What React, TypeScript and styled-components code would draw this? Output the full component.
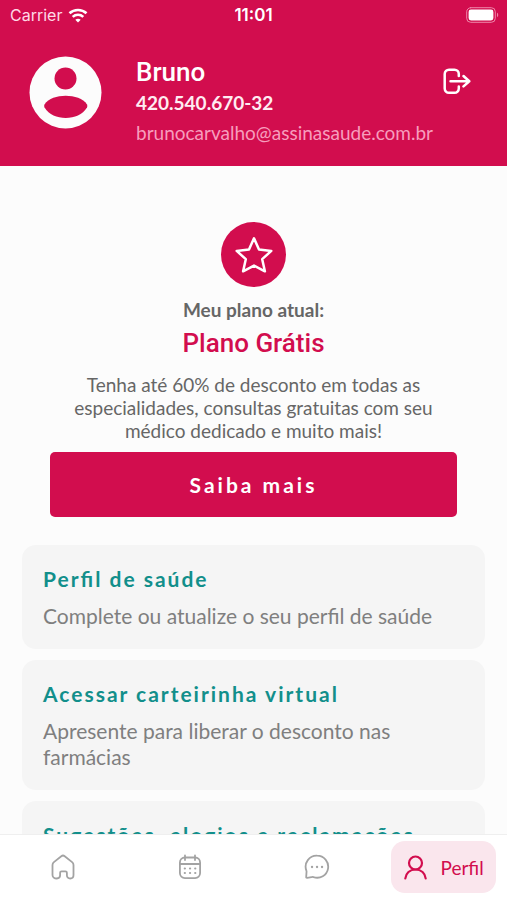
import React from "react";
import styled, { createGlobalStyle } from "styled-components";

const color = {
  brand: "#d20d4e",
  brandSoft: "#fae6ed",
  teal: "#128f8b",
  page: "#fcfcfc",
  card: "#f5f5f5",
  ink: "#666666",
  muted: "#7f7f7f",
  idle: "#a3a3a3",
};

const GlobalStyle = createGlobalStyle`
  *, *::before, *::after { box-sizing: border-box; }
  body {
    margin: 0;
    background: ${color.page};
    font-family: Lato, "Liberation Sans", sans-serif;
  }
  h1, h2, p { margin: 0; }
  button { font: inherit; border: 0; padding: 0; cursor: pointer; }
`;

const Screen = styled.div`
  display: flex;
  flex-direction: column;
  height: 100vh;
`;

const Header = styled.header`
  flex: none;
  background: ${color.brand};
  color: #fff;
  padding-bottom: 18px;
`;

const StatusBar = styled.div`
  display: grid;
  grid-template-columns: 1fr auto 1fr;
  align-items: center;
  height: 30px;
  padding: 0 8px;
  font-family: Inter, sans-serif;
  font-size: 16px;
  line-height: 20px;
`;

const Carrier = styled.div`
  display: flex;
  align-items: center;
  gap: 6px;
  padding-left: 2px;
  color: #ffd9e6;
`;

const Clock = styled.time`
  font-size: 17px;
  font-weight: 600;
`;

const StatusEnd = styled.div`
  display: flex;
  justify-content: flex-end;
`;

const Identity = styled.div`
  display: flex;
  align-items: flex-start;
  padding: 26px 36px 0 29px;
`;

const IdentityText = styled.div`
  flex: 1;
  min-width: 0;
  margin-left: 34px;
`;

const UserName = styled.h1`
  font-family: Roboto, sans-serif;
  font-size: 26px;
  font-weight: 500;
  line-height: 32px;
`;

const Document = styled.p`
  font-size: 19px;
  font-weight: 700;
  line-height: 30px;
  color: #ffecf2;
`;

const Email = styled.p`
  font-size: 19px;
  line-height: 30px;
  color: #f79dbd;
  white-space: nowrap;
`;

const LogoutButton = styled.button`
  display: flex;
  margin-top: 12px;
  background: none;
  color: #fff;
`;

const Content = styled.main`
  flex: 1;
  min-height: 0;
  overflow: hidden auto;
  scrollbar-width: none;
  padding: 56px 22px 20px;
`;

const Plan = styled.section`
  display: flex;
  flex-direction: column;
  align-items: center;
  padding: 0 28px;
  text-align: center;
`;

const PlanBadge = styled.div`
  display: grid;
  place-items: center;
  width: 65px;
  height: 65px;
  border-radius: 50%;
  background: ${color.brand};
  color: #fff;
`;

const PlanLabel = styled.p`
  margin-top: 11px;
  font-size: 19px;
  font-weight: 700;
  line-height: 24px;
  color: ${color.ink};
`;

const PlanName = styled.h2`
  margin-top: 5px;
  font-family: Roboto, sans-serif;
  font-size: 26px;
  font-weight: 500;
  line-height: 32px;
  color: ${color.brand};
`;

const PlanText = styled.p`
  max-width: 360px;
  margin-top: 14px;
  font-size: 19px;
  line-height: 23px;
  color: ${color.ink};
`;

const PrimaryButton = styled.button`
  width: 100%;
  height: 65px;
  margin-top: 10px;
  border-radius: 5px;
  background: ${color.brand};
  color: #fff;
  && {
    font-family: Lato, sans-serif;
    font-size: 21px;
    font-weight: 700;
    letter-spacing: 3px;
  }
`;

const CardList = styled.div`
  display: flex;
  flex-direction: column;
  gap: 11px;
  margin-top: 28px;
`;

const Card = styled.button`
  display: block;
  width: 100%;
  padding: 20px 21px;
  border-radius: 14px;
  background: ${color.card};
  text-align: left;
`;

const CardTitle = styled.span`
  display: block;
  font-size: 21px;
  font-weight: 700;
  line-height: 28px;
  letter-spacing: 2px;
  font-feature-settings: "liga" 1;
  color: ${color.teal};
`;

const CardText = styled.span`
  display: block;
  margin-top: 10px;
  font-size: 21px;
  line-height: 26px;
  color: ${color.muted};
`;

const TabBar = styled.nav`
  flex: none;
  display: grid;
  grid-template-columns: repeat(4, 1fr);
  align-items: start;
  height: 66px;
  padding-top: 6px;
  border-top: 1px solid #efefef;
  background: #fff;
`;

const Tab = styled.button<{ $active?: boolean }>`
  display: flex;
  align-items: center;
  justify-content: center;
  gap: 14px;
  height: 52px;
  margin: 0 11px;
  border-radius: 14px;
  background: ${({ $active }) => ($active ? color.brandSoft : "transparent")};
  color: ${({ $active }) => ($active ? color.brand : color.idle)};
  && {
    font-size: 19px;
  }
`;

const Icon = styled.svg`
  display: block;
  flex: none;
  fill: none;
  stroke: currentColor;
  stroke-linecap: round;
  stroke-linejoin: round;
`;

const WifiIcon = () => (
  <Icon width="20" height="15" viewBox="0 0 20 15" strokeWidth="2.6">
    <path d="M1.5 5.3C6.2.9 13.8.9 18.5 5.3" strokeLinecap="butt" stroke="#fff" />
    <path d="M4.7 8.9c3-2.8 7.6-2.8 10.6 0" strokeLinecap="butt" stroke="#fff" />
    <path d="M10 14.4 7.3 11.7c1.5-1.3 3.9-1.3 5.4 0z" fill="#fff" stroke="none" />
  </Icon>
);

const BatteryIcon = () => (
  <Icon width="33" height="16" viewBox="0 0 33 16">
    <rect x="0.7" y="0.7" width="28.6" height="14.6" rx="4" stroke="#ee86a9" />
    <rect x="2.6" y="2.6" width="24.8" height="10.8" rx="2.4" fill="#fff" stroke="none" />
    <path d="M31 5.8c1.6.6 1.6 3.8 0 4.4z" fill="#ee86a9" stroke="none" />
  </Icon>
);

const AvatarIcon = () => (
  <Icon width="73" height="73" viewBox="0 0 73 73">
    <circle cx="36.5" cy="36.5" r="36" fill="#fcfcfc" stroke="none" />
    <circle cx="36.5" cy="22.5" r="11" fill={color.brand} stroke="none" />
    <path
      d="M15.5 48.5C19.5 42.5 28 39.8 36.7 39.8S54 42.5 58 48.5Q58.8 50 58 51.5C53.5 58.6 45.5 62 36.7 62S20 58.6 15.5 51.5Q14.7 50 15.5 48.5z"
      fill={color.brand}
      stroke="none"
    />
  </Icon>
);

const LogoutIcon = () => (
  <Icon width="28" height="27" viewBox="0 0 28 27" strokeWidth="2.5">
    <path d="M15.8 8V6a4.3 4.3 0 0 0-4.3-4.3H6A4.3 4.3 0 0 0 1.7 6v14.5A4.3 4.3 0 0 0 6 24.800h5.500a4.300 4.300 0 0 0 4.300-4.300v-2" />
    <path d="M7.500 13.200h18.800M20.500 8l5.800 5.200-5.800 5.200" />
  </Icon>
);

const StarIcon = () => (
  <Icon width="38" height="38" viewBox="0 0 38 38" strokeWidth="2.500">
    <path d="M19 2.300 24 13.600 36.300 14.900 27.200 23.200 29.900 35.300 19 29.600 8.100 35.300 10.800 23.200 1.700 14.900 14 13.600z" />
  </Icon>
);

const HomeIcon = () => (
  <Icon width="24" height="26" viewBox="0 0 24 26" strokeWidth="1.800">
    <path d="M1.500 11c0-1.200.5-2.200 1.400-2.900l7.400-5.900c1-.8 2.400-.8 3.400 0l7.400 5.900c.9.700 1.400 1.700 1.400 2.900v10c0 2-1.400 3.500-3.300 3.500s-3.300-1.300-3.300-3.200V18.800c0-.9-.6-1.500-1.500-1.500H10.600c-.9 0-1.500.6-1.500 1.500v2.500c0 1.900-1.400 3.200-3.300 3.200-2.500 0-4.300-1.500-4.300-3.500z" />
  </Icon>
);

const CalendarIcon = () => (
  <Icon width="24" height="26" viewBox="0 0 24 26" strokeWidth="1.800">
    <rect x="1.900" y="3.500" width="20.200" height="20.600" rx="5" />
    <path d="M2 10h20M7 1.500v4.500M17 1.500v4.500" />
    <path d="M6.800 14.500h.1M12 14.500h.1M17.200 14.500h.1M6.800 19h.1M12 19h.1M17.200 19h.1" strokeWidth="2.200" />
  </Icon>
);

const ChatIcon = () => (
  <Icon width="26" height="26" viewBox="0 0 26 26" strokeWidth="1.800">
    <path d="M13.200 1.700a11 11 0 1 1-3.600 21.400c-.8-.3-1.300-.3-2 .1l-4.500.7c-.7.100-1-.3-.9-.9l.3-4.700c.1-.7.100-1.200-.2-1.900A11 11 0 0 1 13.200 1.700z" />
    <path d="M8 13h.1M13 13h.1M18 13h.1" strokeWidth="2.300" />
  </Icon>
);

const PersonIcon = () => (
  <Icon width="23" height="25" viewBox="0 0 23 25" strokeWidth="2.200">
    <circle cx="11.500" cy="8" r="6.500" />
    <path d="M1.300 23.500c.5-5.300 4.500-9 10.200-9s9.700 3.700 10.200 9" />
  </Icon>
);

const cards = [
  { title: "Perfil de saúde", text: "Complete ou atualize o seu perfil de saúde" },
  { title: "Acessar carteirinha virtual", text: "Apresente para liberar o desconto nas farmácias" },
  { title: "Sugestões, elogios e reclamações", text: "" },
];

export default function App() {
  return (
    <Screen>
      <GlobalStyle />
      <Header>
        <StatusBar>
          <Carrier>
            Carrier
            <WifiIcon />
          </Carrier>
          <Clock>11:01</Clock>
          <StatusEnd>
            <BatteryIcon />
          </StatusEnd>
        </StatusBar>
        <Identity>
          <AvatarIcon />
          <IdentityText>
            <UserName>Bruno</UserName>
            <Document>420.540.670-32</Document>
            <Email>brunocarvalho@assinasaude.com.br</Email>
          </IdentityText>
          <LogoutButton type="button" aria-label="Sair">
            <LogoutIcon />
          </LogoutButton>
        </Identity>
      </Header>

      <Content>
        <Plan>
          <PlanBadge>
            <StarIcon />
          </PlanBadge>
          <PlanLabel>Meu plano atual:</PlanLabel>
          <PlanName>Plano Grátis</PlanName>
          <PlanText>
            Tenha até 60% de desconto em todas as especialidades, consultas gratuitas com seu médico
            dedicado e muito mais!
          </PlanText>
          <PrimaryButton type="button">Saiba mais</PrimaryButton>
        </Plan>
        <CardList>
          {cards.map(({ title, text }) => (
            <Card type="button" key={title}>
              <CardTitle>{title}</CardTitle>
              {text && <CardText>{text}</CardText>}
            </Card>
          ))}
        </CardList>
      </Content>

      <TabBar>
        <Tab type="button" aria-label="Início">
          <HomeIcon />
        </Tab>
        <Tab type="button" aria-label="Agenda">
          <CalendarIcon />
        </Tab>
        <Tab type="button" aria-label="Mensagens">
          <ChatIcon />
        </Tab>
        <Tab type="button" $active aria-current="page">
          <PersonIcon />
          Perfil
        </Tab>
      </TabBar>
    </Screen>
  );
}
